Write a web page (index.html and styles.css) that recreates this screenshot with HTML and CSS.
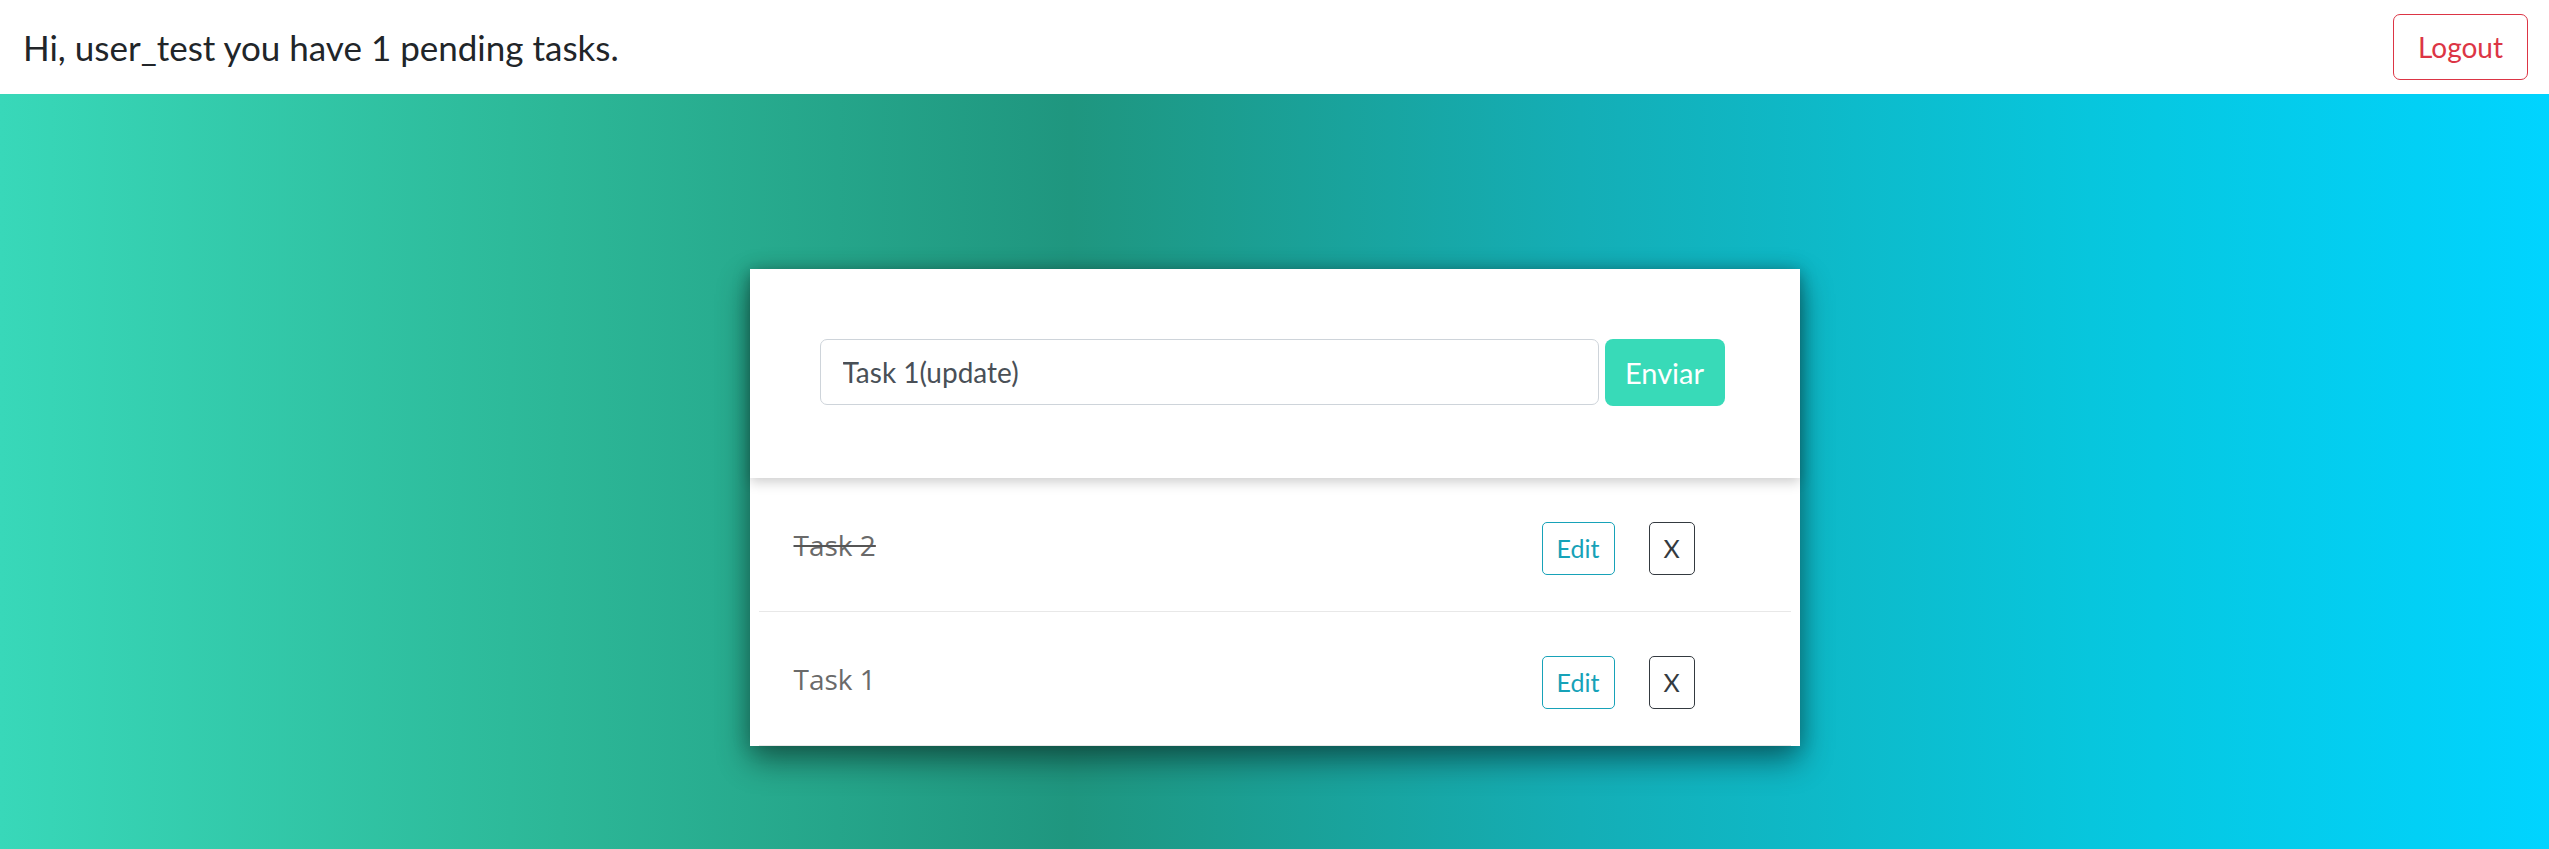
FILE: index.html
```html
<!DOCTYPE html>
<html lang="en">
<head>
<meta charset="utf-8">
<title>Tasks</title>
<link rel="stylesheet" href="styles.css">
</head>
<body>
<header class="navbar">
  <span class="greeting">Hi, user_test you have 1 pending tasks.</span>
  <button class="btn btn-logout">Logout</button>
</header>
<main class="stage">
  <section class="card">
    <form class="task-form">
      <input class="task-input" type="text" value="Task 1(update)">
      <button class="btn btn-send" type="button">Enviar</button>
    </form>
    <ul class="task-list">
      <li class="task-row">
        <span class="task-name done">Task 2</span>
        <div class="actions">
          <button class="btn btn-edit">Edit</button>
          <button class="btn btn-del">X</button>
        </div>
      </li>
      <li class="task-row">
        <span class="task-name">Task 1</span>
        <div class="actions">
          <button class="btn btn-edit">Edit</button>
          <button class="btn btn-del">X</button>
        </div>
      </li>
    </ul>
  </section>
</main>
</body>
</html>
```
FILE: styles.css
```css
* { box-sizing: border-box; }
html, body { margin: 0; padding: 0; }
body {
  font-family: "Lato", "Liberation Sans", sans-serif;
  color: #212529;
  height: 849px;
  overflow: hidden;
  display: flex;
  flex-direction: column;
}
.navbar {
  height: 94px;
  flex: 0 0 94px;
  background: #ffffff;
  display: flex;
  align-items: center;
  justify-content: space-between;
  padding: 0 21px 0 23px;
}
.greeting {
  font-size: 35px;
  color: #212529;
}
.btn {
  font-family: "Lato", "Liberation Sans", sans-serif;
  background: transparent;
  cursor: pointer;
  display: inline-flex;
  align-items: center;
  justify-content: center;
  padding: 0;
}
.btn-logout {
  width: 135px;
  height: 66px;
  border: 1.5px solid #dc3545;
  border-radius: 7px;
  color: #dc3545;
  font-size: 28px;
}
.stage {
  flex: 1 1 auto;
  background: linear-gradient(90deg, #38d8b9 0%, #2cb797 22%, #1f967f 42%, #14aeb6 62%, #07c6dd 82%, #00d4ff 100%);
  display: flex;
  flex-direction: column;
  align-items: center;
  padding-top: 175px;
}
.card {
  width: 1050px;
  background: #ffffff;
  box-shadow: 0 14px 30px rgba(0, 0, 0, 0.45), 0 0 18px rgba(0, 0, 0, 0.15);
}
.task-form {
  margin: 0;
  display: flex;
  gap: 6px;
  padding: 70px 75px 72px 70px;
  position: relative;
  z-index: 1;
  background: #ffffff;
  box-shadow: 0 4px 12px rgba(0, 0, 0, 0.2);
}
.task-input {
  flex: 1 1 auto;
  height: 66px;
  border: 1.5px solid #ced4da;
  border-radius: 7px;
  padding: 0 22px;
  font-family: "Lato", "Liberation Sans", sans-serif;
  font-size: 28px;
  color: #495057;
  outline: none;
}
.btn-send {
  flex: 0 0 120px;
  height: 67px;
  border: none;
  border-radius: 8px;
  background: #38dab8;
  color: #ffffff;
  font-size: 29px;
}
.task-list {
  list-style: none;
  margin: 0 9px;
  padding: 0;
}
.task-row {
  height: 134px;
  display: flex;
  align-items: center;
  justify-content: space-between;
  padding: 0 96px 0 35px;
  border-bottom: 1.5px solid #e8e8e8;
}
.task-name {
  font-family: "Open Sans", "Noto Sans", sans-serif;
  font-size: 28px;
  color: #6a6a6a;
}
.task-name.done {
  text-decoration: line-through;
  text-decoration-color: #555555;
  text-decoration-thickness: 2px;
}
.actions {
  display: flex;
  gap: 34px;
  padding-top: 7px;
}
.btn-edit {
  width: 73px;
  height: 53px;
  border: 1.5px solid #17a2b8;
  border-radius: 5px;
  color: #17a2b8;
  font-size: 25px;
}
.btn-del {
  width: 46px;
  height: 53px;
  border: 1.5px solid #343a40;
  border-radius: 5px;
  color: #343a40;
  font-size: 25px;
}
```
